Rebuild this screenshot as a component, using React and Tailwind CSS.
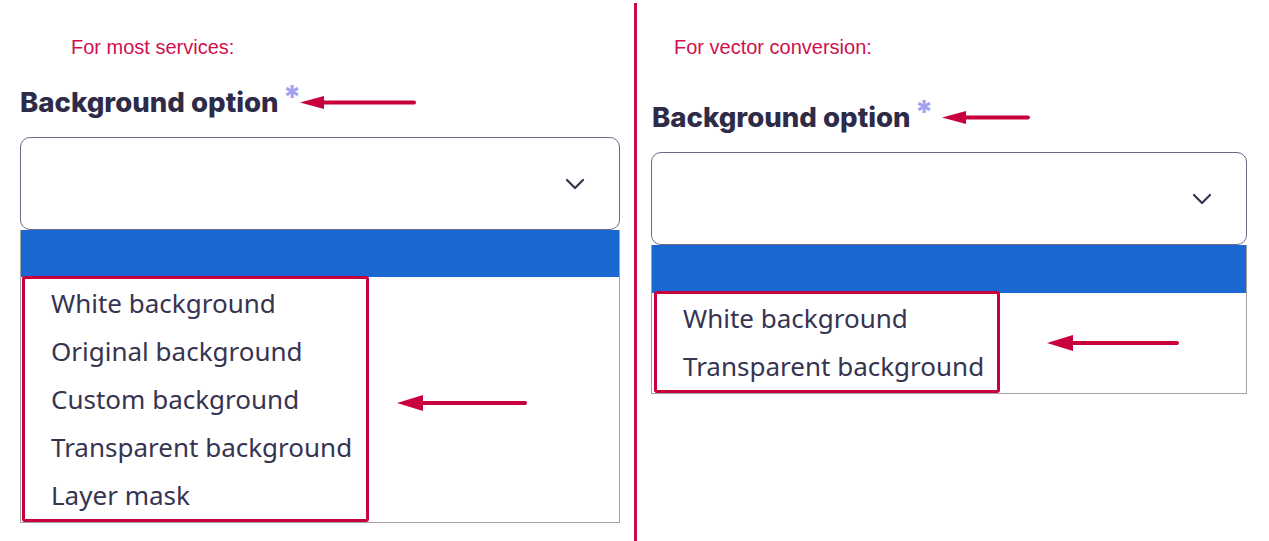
import React from "react";

const RED = "#c8003c";

function Arrow({ w, h = 16, head = 22 }) {
  const c = h / 2;
  return (
    <svg width={w} height={h} viewBox={`0 0 ${w} ${h}`} className="block shrink-0">
      <line x1={head - 2} y1={c} x2={w - 2} y2={c} stroke={RED} strokeWidth="4" strokeLinecap="round" />
      <polygon points={`0,${c} ${head},${1} ${head},${h - 1}`} fill={RED} />
    </svg>
  );
}

function Chevron() {
  return (
    <svg width="20" height="12" viewBox="0 0 20 12" className="block">
      <polyline points="2,2 10,10 18,2" fill="none" stroke="#36334d" strokeWidth="2.2" strokeLinecap="round" strokeLinejoin="round" />
    </svg>
  );
}

function Title({ arrowW, wide }) {
  return (
    <div className="flex items-center h-[34px]">
      <span className="text-[27.6px] leading-[34px] font-extrabold text-[#2e2b48]" style={{ fontFamily: "Inter, sans-serif" }}>
        Background option
      </span>
      <span className="self-start ml-[4px] -mt-[2px] text-[32px] leading-[30px] font-extrabold text-[#a3a2f2]" style={{ fontFamily: "Inter, sans-serif" }}>
        *
      </span>
      <div className={wide ? "ml-[9px]" : "-ml-[1px]"}>
        <Arrow w={arrowW} h={15} head={24} />
      </div>
    </div>
  );
}

function Option({ children }) {
  return (
    <div className="h-[48px] flex items-center pl-[26px] text-[26px] text-[#363450] whitespace-nowrap" style={{ fontFamily: "'Noto Sans', 'Open Sans', sans-serif" }}>
      {children}
    </div>
  );
}

const headerStyle = { fontFamily: "'Liberation Sans', Arial, sans-serif" };

export default function App() {
  return (
    <div className="flex w-[1269px] h-[541px] bg-white overflow-hidden">
      {/* Left panel */}
      <div className="w-[634px] shrink-0">
        <div className="pt-[36px] pl-[71px] text-[20px] leading-[22px] text-[#d0104c]" style={headerStyle}>
          For most services:
        </div>
        <div className="pl-[20px] mt-[27px]">
          <Title arrowW={116} />
        </div>
        <div className="ml-[20px] mt-[18px] w-[600px] h-[93px] rounded-[10px] border-[1.5px] border-[#6e6a85] flex items-center justify-end pr-[34px]">
          <Chevron />
        </div>
        <div className="ml-[20px] w-[600px] border border-[#a3a3a3] border-t-0">
          <div className="h-[47px] bg-[#1a67d2]" />
          <div className="flex items-start -mt-[1px]">
            <div className="ml-[1px] w-[347px] border-[3px] border-[#c8003c] rounded-[3px] py-0">
              <Option>White background</Option>
              <Option>Original background</Option>
              <Option>Custom background</Option>
              <Option>Transparent background</Option>
              <Option>Layer mask</Option>
            </div>
            <div className="ml-[28px] mt-[118px]">
              <Arrow w={130} h={18} head={26} />
            </div>
          </div>
        </div>
      </div>

      {/* Divider */}
      <div className="w-[3px] shrink-0 bg-[#cc0a44] mt-[3px]" />

      {/* Right panel */}
      <div className="flex-1">
        <div className="pt-[36px] pl-[37px] text-[20px] leading-[22px] text-[#d0104c]" style={headerStyle}>
          For vector conversion:
        </div>
        <div className="pl-[15px] mt-[42px]">
          <Title arrowW={88} wide />
        </div>
        <div className="ml-[14px] mt-[18px] w-[596px] h-[93px] rounded-[10px] border-[1.5px] border-[#6e6a85] flex items-center justify-end pr-[34px]">
          <Chevron />
        </div>
        <div className="ml-[14px] w-[596px] border border-[#a3a3a3] border-t-0">
          <div className="h-[48px] bg-[#1a67d2]" />
          <div className="flex items-start -mt-[2px]">
            <div className="ml-[2px] w-[346px] border-[3px] border-[#c8003c] rounded-[3px]">
              <Option>White background</Option>
              <Option>Transparent background</Option>
            </div>
            <div className="ml-[47px] mt-[43px]">
              <Arrow w={132} h={18} head={26} />
            </div>
          </div>
        </div>
      </div>
    </div>
  );
}
